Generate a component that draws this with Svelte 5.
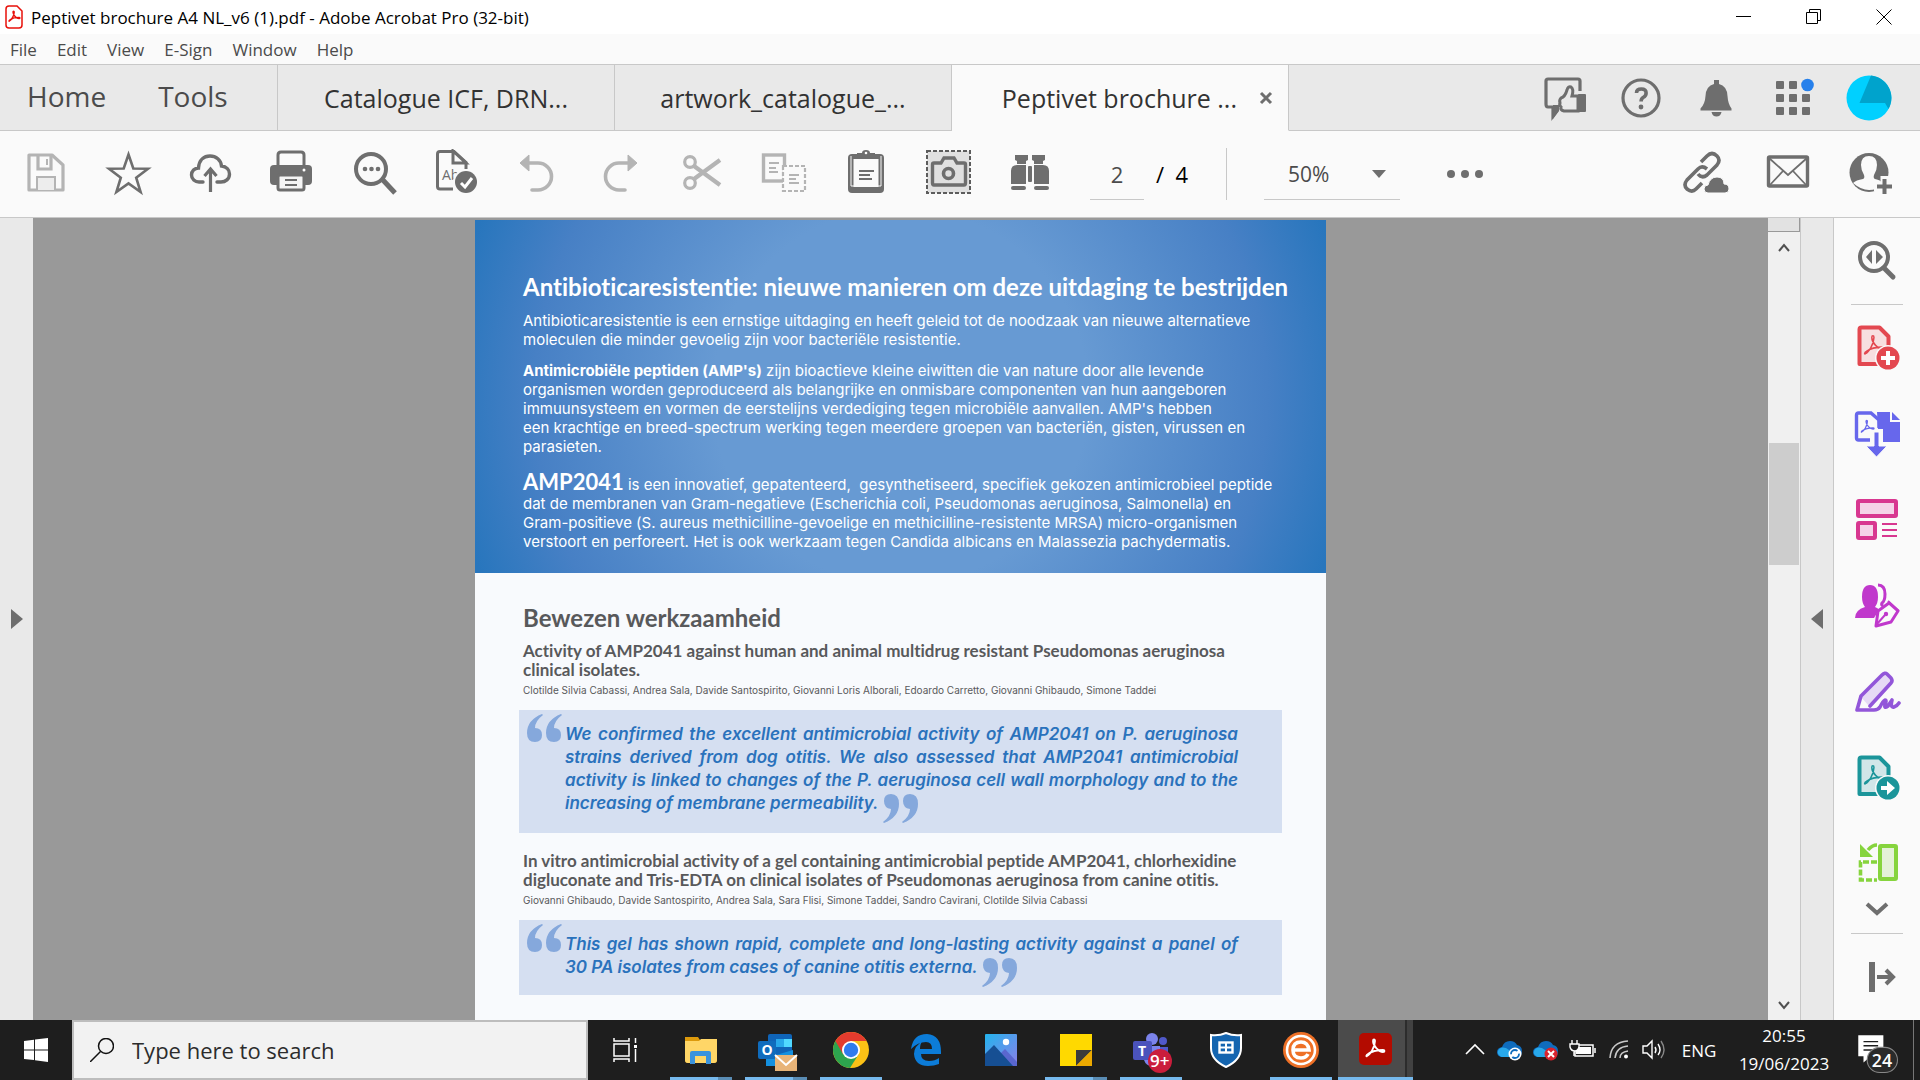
<script>
  const trefoil = 'M4 20c3-1 8-9 8-15 0-2-2-2-2 0 0 5 6 11 10 11 2 0 2-2 0-2-4 0-11 1-15 4-2 1-2 3-1 2z';

  const tools = [
    { label: 'Save', off: true, art: `<path d="M7 6h23l11 10v25H7z" fill="none" stroke="#b4b4b4" stroke-width="3.2" stroke-linejoin="round"/><path d="M16 6v14h13V6" fill="none" stroke="#b4b4b4" stroke-width="3.2"/><path d="M25 10v6" stroke="#b4b4b4" stroke-width="2"/><path d="M15 41V28h18v13" fill="#ededed" stroke="#b4b4b4" stroke-width="2"/>` },
    { label: 'Star', art: `<path d="M24.500 5.500l4.800 14 14.700.3-11.800 8.900 4.400 14.300-12.100-8.600-12.100 8.600 4.400-14.300L5 19.800l14.700-.3z" fill="none" stroke="#6e6e6e" stroke-width="2.600"/>` },
    { label: 'Upload to cloud', art: `<path d="M17 33h-4c-4 0-7.500-3-7.500-7 0-4 3-7 7-7C13 11 18 7 24 7s11 4 11.500 10c5 .5 8 4 8 8 0 5-4 8-8.500 8h-4" fill="none" stroke="#6e6e6e" stroke-width="3.4" stroke-linecap="round"/><path d="M24.500 43V22M18.500 27l6-7 6 7" fill="none" stroke="#6e6e6e" stroke-width="3.2"/>` },
    { label: 'Print', art: `<path d="M10 18V6q0-3 3-3h20q3 0 3 3v12" fill="none" stroke="#6e6e6e" stroke-width="3"/><rect x="2" y="16" width="42" height="20" rx="4" fill="#6e6e6e"/><circle cx="36" cy="21" r="1.500" fill="#fff"/><rect x="10" y="26" width="26" height="15" rx="2" fill="#f5f5f5" stroke="#6e6e6e" stroke-width="3"/><path d="M17 31h12M17 36h12" stroke="#6e6e6e" stroke-width="2"/>` },
    { label: 'Find text', art: `<circle cx="21" cy="20" r="15" fill="none" stroke="#6e6e6e" stroke-width="4"/><path d="M32 30l13 14" stroke="#6e6e6e" stroke-width="5"/><g fill="#6e6e6e"><circle cx="15" cy="20" r="2.300"/><circle cx="21.500" cy="20" r="2.300"/><circle cx="28" cy="20" r="2.300"/></g>` },
    { label: 'Recognise text', art: `<path d="M21 40H8q-2.500 0-2.500-2.500V5Q5.500 2.500 8 2.500h14l12 11V20" fill="none" stroke="#6e6e6e" stroke-width="3"/><path d="M21 2v12h13z" fill="#fafafa" stroke="#6e6e6e" stroke-width="3"/><text x="10" y="31" font-family="Open Sans, sans-serif" font-size="14" fill="#6e6e6e">Ab</text><circle cx="34" cy="33" r="13" fill="#fafafa"/><circle cx="34" cy="33" r="11" fill="#6e6e6e"/><path d="M29 34l4 4 7-9" fill="none" stroke="#fff" stroke-width="3"/>` },
    { label: 'Undo', off: true, art: `<path d="M11 14h13a13 13 0 0 1 0 27h-6" fill="none" stroke="#b4b4b4" stroke-width="3.600" stroke-linecap="round"/><path d="M6 14l9-8v16z" fill="#b4b4b4" stroke="#b4b4b4" stroke-linejoin="round"/>` },
    { label: 'Redo', off: true, art: `<path d="M36 14H23a13 13 0 0 0 0 27h6" fill="none" stroke="#b4b4b4" stroke-width="3.600" stroke-linecap="round"/><path d="M41 14l-9-8v16z" fill="#b4b4b4" stroke="#b4b4b4" stroke-linejoin="round"/>` },
    { label: 'Cut', off: true, art: `<circle cx="12" cy="13" r="5.300" fill="none" stroke="#b4b4b4" stroke-width="3.200"/><circle cx="12" cy="34" r="5.300" fill="none" stroke="#b4b4b4" stroke-width="3.200"/><path d="M16 17L42 36M16 30L42 11" stroke="#b4b4b4" stroke-width="4.200"/>` },
    { label: 'Copy', off: true, art: `<rect x="3.500" y="6" width="21" height="26" fill="none" stroke="#b4b4b4" stroke-width="3.400"/><path d="M9 14h10M9 19h7M9 23h9" stroke="#b4b4b4" stroke-width="1.800"/><rect x="23" y="17" width="22" height="25" fill="#fafafa" stroke="#b4b4b4" stroke-width="2.200" stroke-dasharray="4 2"/><path d="M29 26h10M29 30h7M29 34h10" stroke="#b4b4b4" stroke-width="1.800"/>` },
    { label: 'Paste', art: `<rect x="6" y="5" width="36" height="39" rx="4" fill="#6e6e6e"/><rect x="11.500" y="10" width="25" height="28" fill="#fafafa"/><path d="M9 7v30h30V7" fill="none" stroke="#fafafa" stroke-width="1"/><path d="M15 10V4h5q0-3 4-3t4 3h5v6z" fill="#6e6e6e"/><circle cx="24" cy="4" r="1.300" fill="#fff"/><path d="M17 22h15M17 26h11M17 30h13" stroke="#6e6e6e" stroke-width="2"/>` },
    { label: 'Snapshot', art: `<rect x="3" y="2" width="43" height="42" fill="#e0e0e0" stroke="#5c5c5c" stroke-width="2" stroke-dasharray="4 2"/><path d="M10 14h7l3-5h10l3 5h7q1.500 0 1.500 1.500V34q0 2-1.500 2H10q-1.500 0-1.500-2V15.500Q8.500 14 10 14z" fill="none" stroke="#6e6e6e" stroke-width="3.400"/><circle cx="24.500" cy="24.500" r="5" fill="none" stroke="#6e6e6e" stroke-width="3.600"/>` },
    { label: 'Search document', art: `<g fill="#6e6e6e"><path d="M9 6h13v5l-2 1v3h-9v-3l-2-1zM26 6h13v5l-2 1v3h-9v-3l-2-1z"/><path d="M5 35V22q0-6 6-6h9v19zM43 35V22q0-6-6-6h-9v19z"/><rect x="5" y="37" width="15" height="4" rx="2"/><rect x="28" y="37" width="15" height="4" rx="2"/><rect x="22" y="17" width="4" height="16" rx="1"/></g>` },
  ];

  const shareTools = [
    { label: 'Share link', art: `<g fill="none" stroke="#6e6e6e" stroke-width="3.600"><path d="M20 13l6-6q5-5 10 0 4 4 0 9l-10 10q-5 4-9-1"/><path d="M26 20q-5-4-9 0L6 31q-4 5 0 9 5 4 9 0l6-6"/></g><path d="M27 44q-4 0-4-4t4-4q2-8 9-8 7 0 7 7 5 0 5 5 0 4-4 4z" fill="#6e6e6e" stroke="#fafafa"/>` },
    { label: 'Send by mail', art: `<rect x="4.500" y="8" width="39" height="29" rx="1" fill="none" stroke="#6e6e6e" stroke-width="3.400"/><path d="M5 9l19 17L43 9M5 37l14-15M43 37L29 22" fill="none" stroke="#6e6e6e" stroke-width="1.800"/>` },
    { label: 'Invite people', art: `<circle cx="22" cy="23.500" r="19.500" fill="#6e6e6e"/><path d="M6 34q3-3 10-4 2-1 1-4-3-5-3-10 0-9 8-9t8 9q0 5-3 10-1 3 1 4 6 1 7 4v3q-5 4-13 4T6 34z" fill="#fafafa"/><path d="M38 27v21M27 37.500h21" stroke="#fafafa" stroke-width="9"/><path d="M37.500 30v15M30 37.500h15" stroke="#6e6e6e" stroke-width="4"/>` },
  ];

  const account = [
    { label: 'Give feedback', art: `<path d="M39 17V7q0-2-2-2H7Q5 5 5 7v23q0 3 2 3h5v9l5-7" fill="none" stroke="#6e6e6e" stroke-width="3.200"/><path d="M12 31h6v6l-6 8z" fill="#6e6e6e"/><path d="M20 24q4-1 6-8 1-4 4-3 3 2 1 9h6v15H23q-4-1-3-4-2-2-1-4-1-3 1-5z" fill="#e9e9e9" stroke="#6e6e6e" stroke-width="3"/><rect x="37" y="20" width="8" height="18" rx="1" fill="#6e6e6e"/>` },
    { label: 'Help', art: `<circle cx="24" cy="24" r="18" fill="none" stroke="#6e6e6e" stroke-width="3.200"/><path d="M19.500 19q0-4 4.800-4t4.800 4q0 3-3 4.500-2 1.200-2 4" fill="none" stroke="#6e6e6e" stroke-width="3.600"/><circle cx="24" cy="33" r="2.400" fill="#6e6e6e"/>` },
    { label: 'Notifications', art: `<path d="M21 10V6h5v4q8 2 8.500 12 .5 8 4 12.500v2h-31v-2Q12 30 12.500 22 13 12 21 10z" fill="#6e6e6e"/><path d="M18.500 38h10q-1 4.500-5 4.500t-5-4.500z" fill="#6e6e6e"/>` },
    { label: 'Apps', art: `<g fill="#6e6e6e"><rect x="7" y="7" width="8" height="8" rx="1"/><rect x="20" y="7" width="8" height="8" rx="1"/><rect x="7" y="20" width="8" height="8" rx="1"/><rect x="20" y="20" width="8" height="8" rx="1"/><rect x="33" y="20" width="8" height="8" rx="1"/><rect x="7" y="33" width="8" height="8" rx="1"/><rect x="20" y="33" width="8" height="8" rx="1"/><rect x="33" y="33" width="8" height="8" rx="1"/></g><circle cx="38.500" cy="11" r="6.300" fill="#2680eb"/>` },
    { label: 'Account', art: `<circle cx="24" cy="24" r="22.500" fill="#00d0ff"/><path d="M26 1.600A22.500 22.500 0 0 1 43.500 35L40 29H14.500z" fill="#00a3cc"/>` },
  ];

  const panel = [
    { label: 'Create PDF', art: `<path d="M6.500 5.500q0-2 2-2h18l9 9V40h-29z" fill="#f7dfe0" stroke="#e34850" stroke-width="4" stroke-linejoin="round"/><path d="${trefoil}" transform="translate(8 8) scale(1.080)" fill="none" stroke="#e34850" stroke-width="1.400"/><circle cx="35" cy="34" r="13" fill="#fafafa"/><circle cx="35" cy="34" r="11.500" fill="#e34850"/><path d="M35 27v14M28 34h14" stroke="#fff" stroke-width="4"/>` },
    { label: 'Export PDF', art: `<path d="M17 30H5.500q-2 0-2-2V5q0-2 2-2H18l8 7v8" fill="none" stroke="#6767ec" stroke-width="3.400"/><path d="M24 2h13v10h10v20H30V19h-5z" fill="#6767ec"/><path d="M39 2l8 8h-8z" fill="#6767ec"/><path d="${trefoil}" transform="translate(6 8) scale(.700)" fill="none" stroke="#6767ec" stroke-width="1.800"/><path d="M21 22h5v14h8L23.500 47 13 36h8z" fill="#6767ec" stroke="#fafafa"/>` },
    { label: 'Organize pages', art: `<rect x="5" y="5" width="38" height="15" rx="1" fill="#f5d3e8" stroke="#d83790" stroke-width="4"/><rect x="5" y="27" width="17" height="15" rx="1" fill="#f5d3e8" stroke="#d83790" stroke-width="4"/><path d="M29 28h15M29 34h15M29 40h15" stroke="#d83790" stroke-width="2"/>` },
    { label: 'Request signatures', art: `<path d="M2 36q0-8 10-11-3-4-3-10Q9 3 17 3t8 12q0 6-3 10 3 1 4 3l-5 8z" fill="#c038cc"/><path d="M25 3q7 0 7 9 0 7-3 9-1 2 1 3" fill="none" stroke="#c038cc" stroke-width="3"/><path d="M36 21l9 8-7 11-15 4 2-15z" fill="#fafafa" stroke="#c038cc" stroke-width="3" stroke-linejoin="round"/><path d="M35 19l11 10M24 42l8-9" stroke="#c038cc" stroke-width="2"/><circle cx="33" cy="32" r="2.200" fill="#c038cc"/>` },
    { label: 'Fill and sign', art: `<path d="M8 29L29 6q3-3 6 0l3 3q3 3 0 6L16 38z" fill="#e6daf5"/><path d="M17 38L38 15q2-2 0-5l-4-4q-2-2-5 1L8 28 4 42h17q4 0 6-3 3-6 5-7 2 0 0 5-1 4 3 1l4-6q-2 8 2 7 3-1 5-4" fill="none" stroke="#9256d9" stroke-width="3.600" stroke-linejoin="round" stroke-linecap="round"/>` },
    { label: 'Export to PDF', art: `<path d="M6.500 5.500q0-2 2-2h18l9 9V40h-29z" fill="#d1e6e8" stroke="#1b959a" stroke-width="4" stroke-linejoin="round"/><path d="${trefoil}" transform="translate(8 8) scale(1.080)" fill="none" stroke="#1b959a" stroke-width="1.400"/><circle cx="35" cy="34" r="13" fill="#fafafa"/><circle cx="35" cy="34" r="11.500" fill="#1b959a"/><path d="M28 32h6v-5l8 7-8 7v-5h-6z" fill="#fff"/>` },
    { label: 'Scan and OCR', art: `<rect x="27" y="6" width="16" height="33" rx="1" fill="#e4f1d8" stroke="#86d43d" stroke-width="4"/><path d="M24 22H7.500v18H24" fill="none" stroke="#86d43d" stroke-width="3.600" stroke-dasharray="6 2"/><path d="M24 5q-5 0-9 5" fill="none" stroke="#86d43d" stroke-width="3.600"/><path d="M7 4v13h13z" fill="#86d43d"/>` },
  ];

  const apps = [
    { label: 'File Explorer', state: 'stack', art: `<path d="M8 11h13l2 3h17v20q0 3-3 3H11q-3 0-3-3z" fill="#dd9a0c"/><path d="M8 15h14l2-2h16v21q0 3-3 3H11q-3 0-3-3z" fill="#ffd667"/><path d="M13 38V27q0-2 2-2h17q2 0 2 2v11h-5v-8H18v8z" fill="#3b93dc"/>` },
    { label: 'Outlook', state: 'stack', art: `<rect x="16" y="8" width="24" height="32" rx="2" fill="#0f64b8"/><path d="M24 13h8v8h-8z" fill="#28a8ea"/><path d="M32 13h8v8h-8z" fill="#50d9ff"/><path d="M14 32l27-8v12q0 4-4 4H14z" fill="#1490df"/><rect x="6" y="15" width="18" height="18" rx="2" fill="#0f6cbd"/><text x="9.500" y="29" font-family="Open Sans, sans-serif" font-weight="700" font-size="14" fill="#fff">O</text><rect x="23" y="29" width="22" height="16" fill="#e8b478"/><path d="M23 29l11 10 11-10" fill="none" stroke="#fff" stroke-width="2"/>` },
    { label: 'Chrome', state: 'running', art: `<circle cx="24" cy="24" r="18" fill="#fbc116"/><path d="M8.400 15A18 18 0 0 0 23 42l8.500-13.500L24 24z" fill="#2da44e"/><path d="M24 15h15.600a18 18 0 0 0-31.200 0l7.800 13.500z" fill="#e33b2e"/><circle cx="24" cy="24" r="9" fill="#fff"/><circle cx="24" cy="24" r="7.200" fill="#2f7bee"/>` },
    { label: 'Edge', state: '', art: `<path d="M9 23Q11 8 25 8q14 1 14 18v2H19q0 7 8 7 6 0 10-3v6q-5 2-11 2-13 0-14-12 0-8 8-12-2 2-2 7h12q0-7-6-7-8 0-15 7z" fill="#0c7cd8"/>` },
    { label: 'Photos', state: '', art: `<defs><linearGradient id="sky" x2="1" y2="1"><stop stop-color="#23b4ee"/><stop offset="1" stop-color="#8b7fe8"/></linearGradient></defs><rect x="8" y="8" width="32" height="32" rx="1" fill="url(#sky)"/><path d="M24 27l4-4 12 13v4H24z" fill="#5a67cf"/><path d="M8 28l9-9 19 21H8z" fill="#164f93"/><circle cx="29" cy="16" r="3.200" fill="#fff"/>` },
    { label: 'Sticky Notes', state: 'stack', art: `<rect x="8" y="8" width="32" height="32" fill="#ffd900"/><path d="M24 40V24h16z" fill="#3b3b3b"/><path d="M24 40l16-16v16z" fill="#eca900"/>` },
    { label: 'Teams', state: 'running', art: `<circle cx="25" cy="13" r="6" fill="#7b83eb"/><circle cx="36" cy="15" r="4" fill="#5059c9"/><path d="M17 20h16v14q-2 6-8 6t-8-6z" fill="#7b83eb"/><path d="M33 21h8v10q-3 5-8 3z" fill="#5059c9"/><rect x="6" y="15" width="19" height="19" rx="2" fill="#4b53bc"/><text x="11" y="30" font-family="Open Sans, sans-serif" font-weight="700" font-size="14" fill="#fff">T</text><circle cx="33" cy="35" r="12" fill="#ca1d3c"/><text x="23" y="41" font-family="Open Sans, sans-serif" font-weight="600" font-size="17" fill="#fff">9+</text>` },
    { label: 'Security', state: '', art: `<path d="M24 7q7 3 15 2v13q0 12-15 19Q9 34 9 22V9q8 1 15-2z" fill="#1465b0" stroke="#fff" stroke-width="2"/><rect x="17.500" y="16.500" width="13" height="10" fill="none" stroke="#fff" stroke-width="2.400"/><path d="M17 21.500h14M24 16v11" stroke="#fff" stroke-width="2"/>` },
    { label: 'eBrowser', state: 'running', art: `<circle cx="24" cy="24" r="18" fill="#ee7026"/><circle cx="24" cy="24" r="14" fill="none" stroke="#fff" stroke-width="2.600"/><path d="M15 24h17q-1-8-8-8-8 0-8 8t8 8q5 0 7-4" fill="none" stroke="#fff" stroke-width="3.600"/>` },
    { label: 'Acrobat', state: 'active', art: `<rect x="7" y="7" width="33" height="32" rx="5" fill="#b30b00"/><path d="${trefoil}" transform="translate(11 10)" fill="none" stroke="#fff" stroke-width="1.800"/>` },
  ];

  const cloud = '<path d="M6 31q-4-1-4-5 0-4 5-5 2-6 8-6 5 0 7 4 5 1 5 6 0 6-5 6z" fill="#0f6cbd"/><path d="M5 30q-3-2-2-5 2-5 8-3l12 8q-1 1-3 1H7q-1 0-2-1z" fill="#28a8ea"/>';
  let pageNumber = $state('2');
  let query = $state('');
</script>

{#snippet icon(art)}
  <svg class="icon" viewBox="0 0 48 48" aria-hidden="true">{@html art}</svg>
{/snippet}

{#snippet openMark()}
  <svg class="mark open" viewBox="0 0 35 29" aria-hidden="true"><path d="M15 0Q0 6 0 19q0 9 8 9 7 0 7-7 0-7-7-7 0-7 8-13zM34 0Q19 6 19 19q0 9 8 9 7 0 7-7 0-7-7-7 0-7 8-13z" fill="#85a8dc" /></svg>
{/snippet}

{#snippet closeMark()}
  <svg class="mark close" viewBox="0 0 35 29" aria-hidden="true"><path d="M1 29q15-6 15-19 0-10-8-10-7 0-7 7t7 8q0 7-8 13zM20 29q15-6 15-19 0-10-8-10-7 0-7 7t7 8q0 7-8 13z" fill="#85a8dc" /></svg>
{/snippet}

<div class="screen">
  <header class="title">
    <svg class="logo" viewBox="0 0 18 24" aria-hidden="true"><path d="M1 4q0-3 3-3h8l5 5v14q0 3-3 3H4q-3 0-3-3z" fill="#fff" stroke="#e8100a" stroke-width="1.500" /><path d={trefoil} transform="translate(2 4) scale(.600)" fill="none" stroke="#e8100a" stroke-width="2.400" /></svg>
    <span>Peptivet brochure A4 NL_v6 (1).pdf - Adobe Acrobat Pro (32-bit)</span>
    <div class="window-controls">
      <button aria-label="Minimize"><svg viewBox="0 0 16 16"><path d="M0 7.500h15" /></svg></button>
      <button aria-label="Restore"><svg viewBox="0 0 16 16"><path d="M.5 3.500h11v11H.5zM3.500 3.500v-3h11v11h-3" /></svg></button>
      <button aria-label="Close window"><svg viewBox="0 0 16 16"><path d="M.5.500l15 15M15.500.500l-15 15" /></svg></button>
    </div>
  </header>

  <nav class="menu">
    {#each ['File', 'Edit', 'View', 'E-Sign', 'Window', 'Help'] as item}
      <button>{item}</button>
    {/each}
  </nav>

  <div class="tabs">
    <div class="fixed"><button>Home</button><button>Tools</button></div>
    <button class="tab">Catalogue ICF, DRN...</button>
    <button class="tab">artwork_catalogue_...</button>
    <div class="tab current">
      <button>Peptivet brochure ...</button>
      <button class="shut" aria-label="Close tab"><svg viewBox="0 0 14 14"><path d="M2 2l10 10M12 2L2 12" stroke="#6e6e6e" stroke-width="3" /></svg></button>
    </div>
    <div class="account">
      {#each account as a}<button aria-label={a.label}>{@render icon(a.art)}</button>{/each}
    </div>
  </div>

  <div class="toolbar">
    {#each tools as t}
      <button class="tool" aria-label={t.label} disabled={t.off}>{@render icon(t.art)}</button>
    {/each}
    <input class="page-no" aria-label="Page number" bind:value={pageNumber} />
    <span class="total">/&nbsp; 4</span>
    <div class="zoom">
      <select aria-label="Zoom level"><option>50%</option></select>
      <svg viewBox="0 0 14 8" aria-hidden="true"><path d="M0 0h14L7 8z" fill="#6e6e6e" /></svg>
    </div>
    <button class="more" aria-label="More tools"><svg viewBox="0 0 36 8"><circle cx="4" cy="4" r="4" /><circle cx="18" cy="4" r="4" /><circle cx="32" cy="4" r="4" /></svg></button>
    <div class="share">
      {#each shareTools as t}<button aria-label={t.label}>{@render icon(t.art)}</button>{/each}
    </div>
  </div>

  <div class="work">
    <button class="strip left" aria-label="Open navigation pane"><svg viewBox="0 0 12 20"><path d="M0 0l12 10L0 20z" fill="#6e6e6e" /></svg></button>
    <main class="viewer">
      <article class="page">
        <section class="intro">
          <h1>Antibioticaresistentie: nieuwe manieren om deze uitdaging te bestrijden</h1>
          <p>Antibioticaresistentie is een ernstige uitdaging en heeft geleid tot de noodzaak van nieuwe alternatieve<br />moleculen die minder gevoelig zijn voor bacteriële resistentie.</p>
          <p><strong>Antimicrobiële peptiden (AMP's)</strong> zijn bioactieve kleine eiwitten die van nature door alle levende<br />organismen worden geproduceerd als belangrijke en onmisbare componenten van hun aangeboren<br />immuunsysteem en vormen de eerstelijns verdediging tegen microbiële aanvallen. AMP's hebben<br />een krachtige en breed-spectrum werking tegen meerdere groepen van bacteriën, gisten, virussen en<br />parasieten.</p>
          <p class="amp"><strong class="big">AMP2041</strong> is een innovatief, gepatenteerd,&nbsp; gesynthetiseerd, specifiek gekozen antimicrobieel peptide<br />dat de membranen van Gram-negatieve (Escherichia coli, Pseudomonas aeruginosa, Salmonella) en<br />Gram-positieve (S. aureus methicilline-gevoelige en methicilline-resistente MRSA) micro-organismen<br />verstoort en perforeert. Het is ook werkzaam tegen Candida albicans en Malassezia pachydermatis.</p>
        </section>
        <section class="proof">
          <h2>Bewezen werkzaamheid</h2>
          <h3>Activity of AMP2041 against human and animal multidrug resistant Pseudomonas aeruginosa<br />clinical isolates.</h3>
          <p class="authors">Clotilde Silvia Cabassi, Andrea Sala, Davide Santospirito, Giovanni Loris Alborali, Edoardo Carretto, Giovanni Ghibaudo, Simone Taddei</p>
          <blockquote>
            {@render openMark()}
            <span class="line full">We confirmed the excellent antimicrobial activity of AMP2041 on P. aeruginosa</span>
            <span class="line full">strains derived from dog otitis. We also assessed that AMP2041 antimicrobial</span>
            <span class="line full">activity is linked to changes of the P. aeruginosa cell wall morphology and to the</span>
            <span class="line">increasing of membrane permeability.{@render closeMark()}</span>
          </blockquote>
          <h3>In vitro antimicrobial activity of a gel containing antimicrobial peptide AMP2041, chlorhexidine<br />digluconate and Tris-EDTA on clinical isolates of Pseudomonas aeruginosa from canine otitis.</h3>
          <p class="authors">Giovanni Ghibaudo, Davide Santospirito, Andrea Sala, Sara Flisi, Simone Taddei, Sandro Cavirani, Clotilde Silvia Cabassi</p>
          <blockquote class="short">
            {@render openMark()}
            <span class="line full">This gel has shown rapid, complete and long-lasting activity against a panel of</span>
            <span class="line">30 PA isolates from cases of canine otitis externa.{@render closeMark()}</span>
          </blockquote>
        </section>
      </article>
    </main>
    <div class="scroll">
      <div class="split"></div>
      <button aria-label="Scroll up"><svg viewBox="0 0 12 9"><path d="M1 8l5-6 5 6" /></svg></button>
      <div class="track"><div class="thumb"></div></div>
      <button aria-label="Scroll down"><svg viewBox="0 0 12 9"><path d="M1 1l5 6 5-6" /></svg></button>
    </div>
    <button class="strip right" aria-label="Collapse tools pane"><svg viewBox="0 0 12 20"><path d="M12 0L0 10l12 10z" fill="#6e6e6e" /></svg></button>
    <aside class="panel">
      <button class="look" aria-label="Search tools">{@render icon('<circle cx="21" cy="20" r="14" fill="none" stroke="#6e6e6e" stroke-width="4"/><path d="M31 31l9 9" stroke="#6e6e6e" stroke-width="5" stroke-linecap="round"/><path d="M19 13v14l-6-7zM23 13v14l7-7z" fill="#6e6e6e"/>')}</button>
      <hr />
      {#each panel as p}<button class="side" aria-label={p.label}>{@render icon(p.art)}</button>{/each}
      <button class="down" aria-label="More"><svg viewBox="0 0 24 14"><path d="M2 2l10 9 10-9" fill="none" stroke="#6e6e6e" stroke-width="4" /></svg></button>
      <hr />
      <button class="out" aria-label="Hide pane">{@render icon('<path d="M19 9v30" stroke="#6e6e6e" stroke-width="6"/><path d="M24 24h16M33 17l7 7-7 7" fill="none" stroke="#6e6e6e" stroke-width="4"/>')}</button>
    </aside>
  </div>

  <footer class="taskbar">
    <button class="start" aria-label="Start"><svg viewBox="0 0 24 24"><path d="M0 3l10-1.300V11.500H0zM11 1.600L24 0v11.500H11zM0 12.500h10V22L0 21zM11 12.500h13V24l-13-1.800z" fill="#fff" /></svg></button>
    <label class="search">
      <svg viewBox="0 0 24 24" aria-hidden="true"><circle cx="16" cy="8" r="7.500" /><path d="M10.500 13.500L0 24" /></svg>
      <input aria-label="Search" placeholder="Type here to search" bind:value={query} />
    </label>
    <button class="views" aria-label="Task view"><svg viewBox="0 0 26 24"><path d="M1 0v3h15V0M1 24v-3h15v3M1 6h15v12H1zM22.500 0v5M22.500 11v13" fill="none" stroke="#fff" stroke-width="1.500" /><path d="M21 7h3v3h-3z" fill="#fff" /></svg></button>
    {#each apps as a}
      <button class="app {a.state}" aria-label={a.label}>{@render icon(a.art)}</button>
    {/each}
    <div class="tray">
      <button aria-label="Show hidden icons"><svg viewBox="0 0 32 48"><path d="M7 28l9-9 9 9" fill="none" stroke="#fff" stroke-width="1.600" /></svg></button>
      <button aria-label="OneDrive syncing"><svg viewBox="0 0 32 48">{@html cloud}<circle cx="20" cy="28" r="6.500" fill="#fff" /><circle cx="20" cy="28" r="4" fill="none" stroke="#0f6cbd" stroke-width="1.800" stroke-dasharray="9 3" /></svg></button>
      <button aria-label="OneDrive error"><svg viewBox="0 0 32 48">{@html cloud}<circle cx="20" cy="28" r="6.500" fill="#d9232e" /><path d="M17 25l6 6M23 25l-6 6" stroke="#fff" stroke-width="2" /></svg></button>
      <button aria-label="Battery"><svg viewBox="0 0 32 48"><path d="M8 19h18v11H8zM28 22v5" fill="none" stroke="#fff" stroke-width="1.500" /><path d="M11 21h13v7H9v-4z" fill="#fff" /><path d="M5 14v4M10 14v4M3 18h9v3q-1 4-4 4-4 0-5-4zM7 25v5" fill="#1e1e1e" stroke="#fff" stroke-width="1.400" /></svg></button>
      <button aria-label="Network"><svg viewBox="0 0 32 48"><path d="M7 32Q8 16 25 15M12 32Q13 21 25 20M17 32Q17 26 25 25" fill="none" stroke="#c8c8c8" stroke-width="1.500" /><circle cx="23" cy="30.500" r="2" fill="#fff" /></svg></button>
      <button aria-label="Volume"><svg viewBox="0 0 32 48"><path d="M4 20h4l5-5v17l-5-5H4zM16 21q2 3 0 6M19 18q4 6 0 11" fill="none" stroke="#fff" stroke-width="1.400" /><path d="M22 15q6 9 0 17" fill="none" stroke="#888" stroke-width="1.400" /></svg></button>
      <button class="lang">ENG</button>
      <button class="clock"><span>20:55</span><span>19/06/2023</span></button>
      <button class="notes" aria-label="24 notifications"><svg viewBox="0 0 44 44"><path d="M6 8h24v20H18l-7 6v-6H6z" fill="#fff" /><path d="M11 14h14M11 18h14M11 22h10" stroke="#1e1e1e" stroke-width="1.400" /><rect x="14.500" y="19.500" width="29" height="24" rx="12" fill="#2a2a2a" stroke="#888" /><text x="19" y="38" font-family="Open Sans, sans-serif" font-size="17" font-weight="600" fill="#fff">24</text></svg></button>
    </div>
  </footer>
</div>

<style>
  :global(body) { margin: 0; }
  .screen { display: flex; flex-direction: column; height: 100vh; overflow: hidden; font-family: "Open Sans", "Noto Sans", sans-serif; background: #fafafa; }
  button, input, select { border: 0; padding: 0; margin: 0; background: none; font: inherit; color: inherit; border-radius: 0; outline: none; }
  button { display: flex; align-items: center; justify-content: center; flex: none; }
  .icon { width: 48px; height: 48px; display: block; }

  .title { display: flex; align-items: center; height: 34px; padding-left: 5px; gap: 8px; background: #fff; font-size: 17px; color: #000; }
  .logo { width: 18px; height: 24px; }
  .window-controls { display: flex; margin-left: auto; padding-right: 1px; }
  .window-controls button { width: 70px; height: 34px; }
  .window-controls svg { width: 16px; height: 16px; fill: none; stroke: #000; }

  .menu { display: flex; align-items: center; gap: 20px; height: 30px; padding: 0 10px; font-size: 17px; color: #4b4b4b; border-bottom: 1px solid #c8c8c8; }

  .tabs { display: flex; height: 66px; background: #e9e9e9; font-size: 25px; color: #323232; }
  .fixed, .tab, .account { box-sizing: border-box; border-bottom: 1px solid #c8c8c8; border-right: 1px solid #c8c8c8; }
  .fixed { display: flex; gap: 52px; width: 278px; padding: 0 0 4px 27px; font-size: 28px; color: #4b4b4b; }
  .tab { width: 337px; }
  .current { display: flex; align-items: center; justify-content: flex-end; gap: 22px; padding-right: 15px; background: #fafafa; border-bottom-color: #fafafa; }
  .shut svg { width: 14px; height: 14px; display: block; }
  .account { display: flex; flex: 1; justify-content: flex-end; gap: 28px; padding-right: 27px; border-right: 0; }

  .toolbar { display: flex; align-items: center; height: 86px; padding-left: 5px; border-bottom: 1px solid #c8c8c8; }
  .tool, .share { height: 86px; box-sizing: border-box; padding-bottom: 2px; }
  .tool { width: 82px; }
  .page-no { width: 54px; height: 50px; margin-left: 19px; border-bottom: 1px solid #c8c8c8; text-align: center; font-size: 22px; color: #4b4b4b; }
  .total { width: 70px; margin-left: 12px; font-size: 22px; color: #000; }
  .zoom { display: flex; align-items: center; width: 174px; height: 52px; box-sizing: border-box; padding: 0 14px 0 61px; border-left: 1px solid #c8c8c8; position: relative; }
  .zoom::after { content: ""; position: absolute; left: 37px; right: 0; bottom: 0; height: 1px; background: #c8c8c8; }
  .zoom select { appearance: none; flex: 1; font-size: 21px; color: #4b4b4b; }
  .zoom svg { width: 14px; height: 8px; }
  .more { margin-left: 47px; }
  .more svg { width: 36px; height: 8px; fill: #6e6e6e; }
  .share { display: flex; gap: 35px; margin-left: auto; padding-right: 25px; }

  .work { display: flex; flex: 1; min-height: 0; background: #e9e9e9; }
  .strip { width: 33px; }
  .strip svg { width: 12px; height: 20px; }
  .right { border-left: 1px solid #c8c8c8; border-right: 1px solid #c8c8c8; width: 34px; box-sizing: border-box; }
  .viewer { flex: 1; min-width: 0; overflow: hidden; padding-top: 2px; background: #999; }
  .page { max-width: 851px; min-height: 100%; margin: 0 auto; background: #f8fafd; font-family: Lato, "Open Sans", sans-serif; font-variant-ligatures: none; white-space: nowrap; }
  .intro { box-sizing: border-box; height: 353px; padding: 52px 48px 0; color: #fff; background: radial-gradient(circle 470px at 50% 50%, #679ad3 40%, #4780c5 78%, #2876bd 97%); }
  h1, h2, h3, p, blockquote { margin: 0; }
  h1 { font-size: 24px; line-height: 30px; font-weight: 700; }
  .intro p { margin-top: 12px; font-family: Inter, sans-serif; font-size: 15px; line-height: 19px; }
  .intro h1 + p { margin-top: 9px; }
  .intro .amp { margin-top: 14px; }
  .big { font-family: Lato, sans-serif; font-size: 22px; line-height: 24px; }
  .proof { padding: 30px 44px 0; color: #58595b; }
  h2, h3, .authors { padding-left: 4px; }
  h2 { font-size: 24px; line-height: 30px; }
  h3 { margin-top: 8px; font-size: 17px; line-height: 19px; }
  .authors { margin-top: 4px; font-family: Inter, sans-serif; font-size: 10px; line-height: 15px; }
  blockquote { display: flex; flex-direction: column; box-sizing: border-box; height: 123px; margin: 12px 0 18px; padding: 13px 44px 0 46px; background: #d5dff1; color: #2a72bc; font-family: Inter, sans-serif; font-size: 17px; line-height: 23px; font-weight: 600; font-style: italic; position: relative; }
  .short { height: 75px; }
  .full { text-align: justify; text-align-last: justify; }
  .mark { width: 35px; height: 29px; position: absolute; }
  .open { left: 8px; top: 4px; }
  .close { margin: 2px 0 0 4px; }

  .scroll { display: flex; flex-direction: column; align-items: center; width: 32px; background: #f0f0f0; }
  .split { width: 32px; height: 14px; box-sizing: border-box; border-right: 1px solid #999; border-bottom: 1px solid #999; background: #e2e2e2; }
  .scroll button { width: 32px; height: 30px; }
  .scroll svg { width: 12px; height: 9px; fill: none; stroke: #505050; stroke-width: 2; }
  .track { flex: 1; width: 30px; padding-top: 181px; box-sizing: border-box; }
  .thumb { height: 122px; background: #cdcdcd; }

  .panel { display: flex; flex-direction: column; align-items: center; width: 86px; background: #fafafa; }
  .panel hr { width: 52px; height: 1px; margin: 0; border: 0; background: #c8c8c8; flex: none; }
  .look { height: 86px; }
  .side { height: 86px; }
  .down { height: 36px; margin-top: -10px; padding-bottom: 12px; box-sizing: border-box; }
  .down svg { width: 24px; height: 14px; }
  .out { height: 86px; }

  .taskbar { display: flex; height: 60px; background: #1e1e1e; color: #fff; }
  .start { width: 72px; }
  .start svg { width: 24px; height: 24px; }
  .search { display: flex; align-items: center; gap: 18px; box-sizing: border-box; width: 516px; padding-left: 16px; border: 2px solid #bdbdbd; background: #f2f2f2; }
  .search svg { width: 24px; height: 24px; fill: none; stroke: #111; stroke-width: 1.500; flex: none; }
  .search input { flex: 1; font-size: 22px; color: #222; }
  .search input::placeholder { color: #2c2c2c; opacity: 1; }
  .views { width: 75px; }
  .views svg { width: 26px; height: 24px; }
  .app { width: 75px; position: relative; }
  .running::after, .stack::after, .active::after { content: ""; position: absolute; left: 7px; right: 6px; bottom: 0; height: 3px; background: #76b9ed; }
  .stack::after { background: linear-gradient(90deg, #76b9ed 48px, #5a8db5 48px); }
  .active { background: linear-gradient(90deg, #4b4b4b 67px, #2c2c2c 67px, #2c2c2c 69px, #414141 69px); }
  .active::after { left: 0; right: 0; }
  .tray { display: flex; margin-left: auto; }
  .tray svg { width: 32px; height: 48px; }
  .tray button { width: 36px; }
  .tray .lang { width: 52px; font-size: 17px; }
  .tray .clock { width: 118px; flex-direction: column; gap: 4px; font-size: 17px; line-height: 24px; }
  .tray .notes { width: 71px; margin-right: 6px; border-right: 1px solid #777; justify-content: flex-start; padding-left: 9px; }
  .tray .notes svg { width: 46px; height: 46px; }
</style>
